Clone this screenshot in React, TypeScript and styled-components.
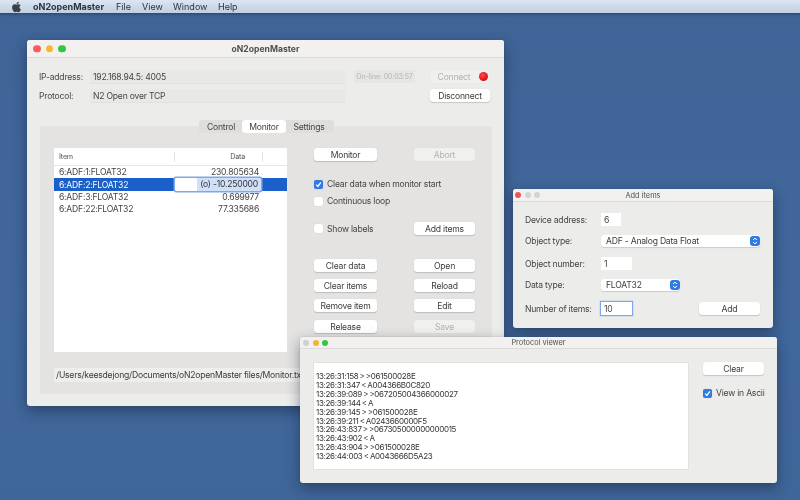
import React from "react";
import styled, { createGlobalStyle } from "styled-components";
import { FaApple } from "react-icons/fa";

const Global = createGlobalStyle`
  html, body { margin: 0; padding: 0; background: #40659a; }
  #root { width: 800px; height: 500px; overflow: hidden; }
  * { box-sizing: border-box; }
`;

const Desktop = styled.div`
  position: relative;
  width: 800px;
  height: 500px;
  overflow: hidden;
  background: linear-gradient(180deg, #3f6496 0%, #41679c 60%, #3f6699 100%);
  font-family: Inter, "Liberation Sans", sans-serif;
  font-size: 8.6px;
  letter-spacing: -0.22px;
  color: #3a3a3a;
  filter: blur(0.35px);
`;

const MenuBar = styled.div`
  display: flex;
  align-items: center;
  height: 13px;
  padding-left: 11px;
  background: linear-gradient(180deg, #dce6f2 0%, #c0cfe2 100%);
  box-shadow: 0 1px 3px rgba(20, 40, 70, 0.6);
  color: #2c3440;
  font-size: 9px;
  letter-spacing: 0;
`;

const AppleMark = styled.span`
  display: flex;
  width: 11px;
  margin-right: 11px;
  font-size: 12px;
  color: #3b4048;
`;

const MenuItem = styled.span<{ $bold?: boolean; $w: number }>`
  width: ${(p) => p.$w}px;
  font-weight: ${(p) => (p.$bold ? 700 : 400)};
  white-space: nowrap;
`;

const Win = styled.div<{ $x: number; $y: number; $w: number; $h: number }>`
  position: absolute;
  left: ${(p) => p.$x}px;
  top: ${(p) => p.$y}px;
  width: ${(p) => p.$w}px;
  height: ${(p) => p.$h}px;
  display: flex;
  flex-direction: column;
  background: #ececeb;
  border-radius: 3px;
  box-shadow: 0 5px 14px rgba(15, 25, 45, 0.45), 0 0 1px rgba(0, 0, 0, 0.3);
`;

const TitleBar = styled.div<{ $h: number }>`
  position: relative;
  flex: none;
  height: ${(p) => p.$h}px;
  display: flex;
  align-items: center;
  justify-content: center;
  background: #f2f1ef;
  border-bottom: 1px solid #dcdbd9;
  border-radius: 3px 3px 0 0;
`;

const TitleText = styled.span<{ $bold?: boolean }>`
  font-size: ${(p) => (p.$bold ? 8.6 : 7.4)}px;
  font-weight: ${(p) => (p.$bold ? 700 : 400)};
  letter-spacing: 0;
  color: #505050;
`;

const Lights = styled.div<{ $left: number; $gap: number }>`
  position: absolute;
  left: ${(p) => p.$left}px;
  top: 50%;
  transform: translateY(-50%);
  display: flex;
  gap: ${(p) => p.$gap}px;
`;

const Light = styled.i<{ $c: string; $s: number }>`
  display: block;
  width: ${(p) => p.$s}px;
  height: ${(p) => p.$s}px;
  border-radius: 50%;
  background: ${(p) => p.$c};
`;

const MainBody = styled.div`
  padding: 12px 12px 12px 13px;
`;

const Header = styled.div`
  display: grid;
  grid-template-columns: 51px 255px 61px 60px;
  grid-template-rows: 14px 14px;
  row-gap: 5px;
  margin-left: -1px;
`;

const Label = styled.span`
  display: flex;
  align-items: center;
  color: #4a4a4a;
  white-space: nowrap;
`;

const ReadField = styled.div`
  display: flex;
  align-items: center;
  padding-left: 3px;
  background: #e8e8e7;
  color: #444;
  border-bottom: 1px solid #e1e1e0;
  white-space: nowrap;
`;

const StatusField = styled.div`
  display: flex;
  align-items: center;
  justify-content: center;
  height: 13px;
  margin-left: 9px;
  width: 61px;
  background: #e6e6e5;
  color: #b4b4b4;
  font-size: 7px;
  letter-spacing: -0.1px;
  white-space: nowrap;
`;

const Btn = styled.div<{ $disabled?: boolean; $w?: number }>`
  position: relative;
  display: flex;
  align-items: center;
  justify-content: center;
  width: ${(p) => (p.$w ? `${p.$w}px` : "100%")};
  height: 13px;
  border-radius: 3px;
  background: ${(p) => (p.$disabled ? "#f0f0ef" : "#ffffff")};
  color: ${(p) => (p.$disabled ? "#b2b2b2" : "#3c3c3c")};
  box-shadow: ${(p) => (p.$disabled ? "0 0 1px rgba(0,0,0,.08)" : "0 1px 1px rgba(0,0,0,.16), 0 0 1px rgba(0,0,0,.1)")};
  white-space: nowrap;
`;

const TopBtnCell = styled.div`
  margin-left: 24px;
  width: 60px;
`;

const ConnectLabel = styled.span`
  margin-right: 12px;
`;

const RedDot = styled.i`
  position: absolute;
  right: 2px;
  top: 2px;
  width: 9px;
  height: 9px;
  border-radius: 50%;
  background: radial-gradient(circle at 40% 35%, #ff4a4a 0%, #e8101c 60%, #c8101a 100%);
`;

const Panel = styled.div`
  position: relative;
  width: 452px;
  height: 268px;
  margin-top: 23px;
  padding: 22px 17px 0 14px;
  background: #e4e3e2;
  border-radius: 3px;
  display: grid;
  grid-template-columns: 233px 161px;
  column-gap: 27px;
`;

const Tabs = styled.div`
  position: absolute;
  top: -6px;
  left: 159px;
  display: flex;
  align-items: center;
  height: 13px;
  width: 135px;
  padding-left: 1px;
  background: #dededd;
  border-radius: 3px;
`;

const Tab = styled.div<{ $on?: boolean; $w: number }>`
  display: flex;
  align-items: center;
  justify-content: center;
  width: ${(p) => p.$w}px;
  height: 13px;
  border-radius: 3px;
  background: ${(p) => (p.$on ? "#fff" : "transparent")};
  color: #444;
`;

const LeftCol = styled.div`
  display: flex;
  flex-direction: column;
`;

const Table = styled.div`
  height: 204px;
  background: #fff;
`;

const TableHead = styled.div`
  display: grid;
  grid-template-columns: 121px 88px 24px;
  height: 18px;
  align-items: center;
  border-bottom: 1px solid #e6e6e6;
  color: #555;
  font-size: 7.2px;
`;

const HeadCell = styled.div<{ $right?: boolean; $sep?: boolean }>`
  height: 10px;
  line-height: 10px;
  padding: ${(p) => (p.$right ? "0 17px 0 0" : "0 0 0 5px")};
  text-align: ${(p) => (p.$right ? "right" : "left")};
  border-right: ${(p) => (p.$sep ? "1px solid #e4e4e4" : "none")};
`;

const TableRow = styled.div<{ $sel?: boolean }>`
  position: relative;
  display: grid;
  grid-template-columns: 121px 84px;
  height: 12.4px;
  align-items: center;
  background: ${(p) => (p.$sel ? "#1b5fc9" : "transparent")};
  color: ${(p) => (p.$sel ? "#fff" : "#444")};
`;

const ItemCell = styled.span`
  padding-left: 5px;
`;

const DataCell = styled.span`
  text-align: right;
`;

const Editor = styled.div`
  height: 13px;
  margin-right: -2px;
  padding-right: 3px;
  text-align: right;
  line-height: 12px;
  color: #333;
  background: linear-gradient(90deg, #fff 0 26%, #cfe0f8 26% 100%);
  box-shadow: 0 0 0 1.5px #7fa9e6;
  border-radius: 1px;
`;

const PathField = styled.div`
  width: 300px;
  height: 14px;
  margin-top: 16px;
  padding-left: 2px;
  line-height: 14px;
  background: #eeeeed;
  color: #3a3a3a;
  white-space: nowrap;
`;

const RightCol = styled.div`
  display: flex;
  flex-direction: column;
`;

const BtnRow = styled.div<{ $top?: number }>`
  display: grid;
  grid-template-columns: 63px 61px;
  column-gap: 37px;
  align-items: center;
  height: 13px;
  margin-top: ${(p) => p.$top ?? 0}px;
`;

const CheckRow = styled.div<{ $top?: number }>`
  display: flex;
  align-items: center;
  gap: 4px;
  height: 12px;
  margin-top: ${(p) => p.$top ?? 0}px;
  color: #444;
  white-space: nowrap;
`;

const Box = styled.span<{ $on?: boolean }>`
  flex: none;
  display: flex;
  align-items: center;
  justify-content: center;
  width: 9px;
  height: 9px;
  border-radius: 2px;
  background: ${(p) => (p.$on ? "#2f7be6" : "#fff")};
  box-shadow: 0 0 1px rgba(0, 0, 0, 0.2);
`;

const Check = ({ on }: { on?: boolean }) => (
  <Box $on={on}>
    {on && (
      <svg width="7" height="7" viewBox="0 0 7 7">
        <path d="M1.2 3.6 L2.9 5.4 L5.8 1.4" fill="none" stroke="#fff" strokeWidth="1.3" />
      </svg>
    )}
  </Box>
);

const AddBody = styled.div`
  flex: 1;
  display: flex;
  flex-direction: column;
  padding: 11px 0 0 12px;
  color: #444;
`;

const FormRow = styled.div<{ $top: number }>`
  flex: none;
  display: grid;
  grid-template-columns: 76px 159px;
  align-items: center;
  height: 13px;
  margin-top: ${(p) => p.$top}px;
`;

const Input = styled.div<{ $w: number; $focus?: boolean }>`
  display: flex;
  align-items: center;
  width: ${(p) => p.$w}px;
  height: 13px;
  padding-left: 3px;
  background: #fff;
  box-shadow: ${(p) => (p.$focus ? "0 0 0 1.2px #7fa9e6" : "none")};
  color: #444;
`;

const Select = styled.div<{ $w: number }>`
  position: relative;
  display: flex;
  align-items: center;
  width: ${(p) => p.$w}px;
  height: 12px;
  padding-left: 5px;
  background: #fff;
  border-radius: 3px;
  box-shadow: 0 1px 1px rgba(0, 0, 0, 0.14);
  color: #3c3c3c;
  white-space: nowrap;
`;

const Stepper = styled.span`
  position: absolute;
  right: 0;
  top: 1px;
  display: flex;
  width: 10px;
  height: 10px;
  border-radius: 3px;
  background: #2f7be6;
`;

const Arrows = () => (
  <Stepper>
    <svg width="10" height="10" viewBox="0 0 10 10">
      <path d="M3 4 L5 2.2 L7 4 M3 6 L5 7.8 L7 6" fill="none" stroke="#fff" strokeWidth="1" />
    </svg>
  </Stepper>
);

const ItemsRow = styled.div`
  display: flex;
  align-items: center;
`;

const AddBtnWrap = styled.div`
  margin-left: 67px;
  width: 61px;
  flex: none;
`;

const ProtoBody = styled.div`
  flex: 1;
  display: grid;
  grid-template-columns: 376px 61px;
  column-gap: 14px;
  padding: 13px 0 0 13px;
`;

const LogBox = styled.div`
  height: 108px;
  padding: 9px 0 0 2px;
  background: #fff;
  border: 1px solid #e2e2e2;
  color: #333;
  font-size: 8px;
  letter-spacing: -0.32px;
  word-spacing: -0.7px;
  line-height: 8.9px;
`;

const LogLine = styled.div`
  white-space: nowrap;
`;

const ProtoSide = styled.div`
  display: flex;
  flex-direction: column;
`;

const log = [
  "13:26:31:158 > >061500028E",
  "13:26:31:347 < A004366B0C820",
  "13:26:39:089 > >067205004366000027",
  "13:26:39:144 < A",
  "13:26:39:145 > >061500028E",
  "13:26:39:211 < A0243660000F5",
  "13:26:43:837 > >067305000000000015",
  "13:26:43:902 < A",
  "13:26:43:904 > >061500028E",
  "13:26:44:003 < A0043666D5A23",
];

export default function App() {
  return (
    <Desktop>
      <Global />
      <MenuBar>
        <AppleMark><FaApple /></AppleMark>
        <MenuItem $bold $w={83}>oN2openMaster</MenuItem>
        <MenuItem $w={26}>File</MenuItem>
        <MenuItem $w={31}>View</MenuItem>
        <MenuItem $w={45}>Window</MenuItem>
        <MenuItem $w={20}>Help</MenuItem>
      </MenuBar>

      <Win $x={27} $y={40} $w={477} $h={366}>
        <TitleBar $h={18}>
          <Lights $left={6} $gap={5}>
            <Light $c="#fc5b57" $s={7.5} />
            <Light $c="#f7b731" $s={7.5} />
            <Light $c="#2fc83f" $s={7.5} />
          </Lights>
          <TitleText $bold>oN2openMaster</TitleText>
        </TitleBar>
        <MainBody>
          <Header>
            <Label>IP-address:</Label>
            <ReadField>192.168.94.5: 4005</ReadField>
            <StatusField>On-line: 00:03:57</StatusField>
            <TopBtnCell>
              <Btn $disabled><ConnectLabel>Connect</ConnectLabel><RedDot /></Btn>
            </TopBtnCell>
            <Label>Protocol:</Label>
            <ReadField>N2 Open over TCP</ReadField>
            <span />
            <TopBtnCell><Btn>Disconnect</Btn></TopBtnCell>
          </Header>
          <Panel>
            <Tabs>
              <Tab $w={42}>Control</Tab>
              <Tab $on $w={44}>Monitor</Tab>
              <Tab $w={46}>Settings</Tab>
            </Tabs>
            <LeftCol>
              <Table>
                <TableHead>
                  <HeadCell $sep>Item</HeadCell>
                  <HeadCell $sep $right>Data</HeadCell>
                  <HeadCell />
                </TableHead>
                <TableRow><ItemCell>6:ADF:1:FLOAT32</ItemCell><DataCell>230.805634</DataCell></TableRow>
                <TableRow $sel><ItemCell>6:ADF:2:FLOAT32</ItemCell><Editor>(o) -10.250000</Editor></TableRow>
                <TableRow><ItemCell>6:ADF:3:FLOAT32</ItemCell><DataCell>0.699977</DataCell></TableRow>
                <TableRow><ItemCell>6:ADF:22:FLOAT32</ItemCell><DataCell>77.335686</DataCell></TableRow>
              </Table>
              <PathField>/Users/keesdejong/Documents/oN2openMaster files/Monitor.txt</PathField>
            </LeftCol>
            <RightCol>
              <BtnRow><Btn>Monitor</Btn><Btn $disabled>Abort</Btn></BtnRow>
              <CheckRow $top={17}><Check on />Clear data when monitor start</CheckRow>
              <CheckRow $top={5}><Check />Continuous loop</CheckRow>
              <BtnRow $top={15}>
                <CheckRow><Check />Show labels</CheckRow>
                <Btn>Add items</Btn>
              </BtnRow>
              <BtnRow $top={24}><Btn>Clear data</Btn><Btn>Open</Btn></BtnRow>
              <BtnRow $top={7}><Btn>Clear items</Btn><Btn>Reload</Btn></BtnRow>
              <BtnRow $top={7}><Btn>Remove item</Btn><Btn>Edit</Btn></BtnRow>
              <BtnRow $top={8}><Btn>Release</Btn><Btn $disabled>Save</Btn></BtnRow>
            </RightCol>
          </Panel>
        </MainBody>
      </Win>

      <Win $x={513} $y={189} $w={260} $h={139}>
        <TitleBar $h={13}>
          <Lights $left={2} $gap={3.7}>
            <Light $c="#ee5550" $s={6} />
            <Light $c="#d4d4d4" $s={6} />
            <Light $c="#d4d4d4" $s={6} />
          </Lights>
          <TitleText>Add items</TitleText>
        </TitleBar>
        <AddBody>
          <FormRow $top={0}><span>Device address:</span><Input $w={20}>6</Input></FormRow>
          <FormRow $top={8}><span>Object type:</span><Select $w={159}>ADF - Analog Data Float<Arrows /></Select></FormRow>
          <FormRow $top={10}><span>Object number:</span><Input $w={31}>1</Input></FormRow>
          <FormRow $top={8}><span>Data type:</span><Select $w={79}>FLOAT32<Arrows /></Select></FormRow>
          <FormRow $top={11}>
            <span>Number of items:</span>
            <ItemsRow>
              <Input $w={31} $focus>10</Input>
              <AddBtnWrap><Btn>Add</Btn></AddBtnWrap>
            </ItemsRow>
          </FormRow>
        </AddBody>
      </Win>

      <Win $x={300} $y={337} $w={477} $h={146}>
        <TitleBar $h={12}>
          <Lights $left={3} $gap={3.7}>
            <Light $c="#d0d0d0" $s={6} />
            <Light $c="#f5b335" $s={6} />
            <Light $c="#2fc83f" $s={6} />
          </Lights>
          <TitleText>Protocol viewer</TitleText>
        </TitleBar>
        <ProtoBody>
          <LogBox>
            {log.map((l) => <LogLine key={l}>{l}</LogLine>)}
          </LogBox>
          <ProtoSide>
            <Btn>Clear</Btn>
            <CheckRow $top={12}><Check on />View in Ascii</CheckRow>
          </ProtoSide>
        </ProtoBody>
      </Win>
    </Desktop>
  );
}
